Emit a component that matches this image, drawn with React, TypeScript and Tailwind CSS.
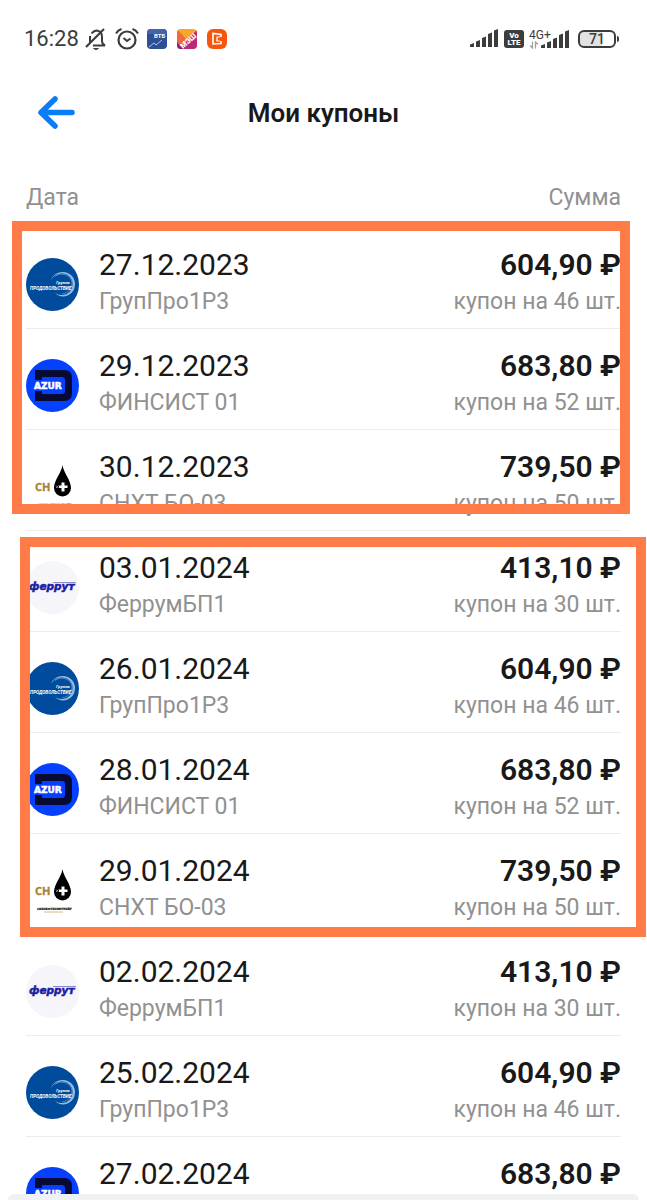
import React from 'react';

type Issuer = 'prod' | 'azur' | 'snht' | 'ferrum';

interface Coupon {
  date: string;
  issuer: Issuer;
  amount: string;
  count: number;
}

interface CouponGroup {
  id: string;
  frame: string;
  coupons: Coupon[];
}

const FRAME = 'after:absolute after:pointer-events-none after:border-[10px] after:border-[#ff7b47]';

const groups: CouponGroup[] = [
  {
    id: 'december',
    frame: `${FRAME} after:-top-[7px] after:bottom-[17px] after:-left-[14px] after:-right-[9px]`,
    coupons: [
      { date: '27.12.2023', issuer: 'prod', amount: '604,90 ₽', count: 46 },
      { date: '29.12.2023', issuer: 'azur', amount: '683,80 ₽', count: 52 },
      { date: '30.12.2023', issuer: 'snht', amount: '739,50 ₽', count: 50 },
    ],
  },
  {
    id: 'january',
    frame: `${FRAME} after:top-[6px] after:-bottom-[2px] after:-left-[6px] after:-right-[25px]`,
    coupons: [
      { date: '03.01.2024', issuer: 'ferrum', amount: '413,10 ₽', count: 30 },
      { date: '26.01.2024', issuer: 'prod', amount: '604,90 ₽', count: 46 },
      { date: '28.01.2024', issuer: 'azur', amount: '683,80 ₽', count: 52 },
      { date: '29.01.2024', issuer: 'snht', amount: '739,50 ₽', count: 50 },
    ],
  },
  {
    id: 'february',
    frame: '',
    coupons: [
      { date: '02.02.2024', issuer: 'ferrum', amount: '413,10 ₽', count: 30 },
      { date: '25.02.2024', issuer: 'prod', amount: '604,90 ₽', count: 46 },
      { date: '27.02.2024', issuer: 'azur', amount: '683,80 ₽', count: 52 },
    ],
  },
];

const issuerNames: Record<Issuer, string> = {
  prod: 'ГрупПро1Р3',
  azur: 'ФИНСИСТ 01',
  snht: 'СНХТ БО-03',
  ferrum: 'ФеррумБП1',
};

const ProdLogo = () => (
  <svg viewBox="0 0 53 53" className="size-[53px] rounded-full bg-[#004b9c]" aria-hidden="true">
    <path d="M25 22 A12 12 0 0 1 37 14 A12 12 0 0 1 49 26 A12 12 0 0 1 37 38.5 A12 12 0 0 1 29 35 A11 11 0 0 0 37 37 A10.5 10.5 0 0 0 46.5 26 A10 10 0 0 0 36 15.5 A12 12 0 0 0 25 22Z" fill="#8fbbe0" />
    <path d="M29 18.5 A11 11 0 0 1 45.5 22 A11 11 0 0 1 36 36" fill="none" stroke="#5f97cb" strokeWidth="0.8" />
    <text x="30" y="26" fontSize="4" fontStyle="italic" fontWeight="700" fill="#fff" fontFamily="'Open Sans', sans-serif">Группа</text>
    <text x="4" y="32" fontSize="4.6" fontStyle="italic" fontWeight="700" fill="#fff" fontFamily="Roboto, sans-serif">ПРОДОВОЛЬСТВИЕ</text>
  </svg>
);

const AzurLogo = () => (
  <svg viewBox="0 0 53 53" className="size-[53px] rounded-full bg-[#0540ff]" aria-hidden="true">
    <path d="M9 11 H38 Q46 11 46 19 V34 Q46 42 38 42 H9 V32 H16 V35 H36 Q39 35 39 32 V21 Q39 18 36 18 H16 V21 H9Z" fill="#070a33" />
    <text x="8" y="30" fontSize="9" fontWeight="700" fill="#fff" stroke="#fff" strokeWidth="0.5" fontFamily="'DejaVu Sans', sans-serif">AZUR</text>
  </svg>
);

const SnhtLogo = () => (
  <svg viewBox="0 0 53 53" className="size-[53px] rounded-full bg-white" aria-hidden="true">
    <text x="9" y="31" fontSize="11" fontWeight="700" fill="#a98138" stroke="#a98138" strokeWidth="0.3" fontFamily="'Noto Sans', sans-serif">CH</text>
    <path d="M36.5 5 C37.5 13 45 20 45 28 A8.5 8.5 0 0 1 28 28 C28 20 35.5 13 36.5 5Z" fill="#000" />
    <path d="M35.5 22.5 H38.5 V25.5 H41.5 V28 H38.5 V31.5 H35.5 V28 H33 V25.5 H35.5Z" fill="#fff" />
    <path d="M30 25.5 L32.5 28 M32.5 25.5 L30 28" stroke="#aaa" strokeWidth="0.8" />
    <text x="11" y="46" fontSize="2.8" fontWeight="700" fill="#111" stroke="#111" strokeWidth="0.2" fontFamily="'DejaVu Sans', sans-serif">СИБНЕФТЕХИМТРЕЙД</text>
    <path d="M18 48 H37" stroke="#d3b98e" strokeWidth="1" />
  </svg>
);

const FerrumLogo = () => (
  <svg viewBox="0 0 53 53" className="size-[53px] rounded-full bg-[#f5f5fa]" aria-hidden="true">
    <path d="M27 21.5 H50" stroke="#8c8ccb" strokeWidth="1" />
    <text x="3" y="29" fontSize="10.5" fontStyle="italic" fontWeight="700" fill="#1c1ca6" stroke="#1c1ca6" strokeWidth="0.5" fontFamily="'DejaVu Sans', sans-serif">феррут</text>
  </svg>
);

const logos: Record<Issuer, React.FC> = {
  prod: ProdLogo,
  azur: AzurLogo,
  snht: SnhtLogo,
  ferrum: FerrumLogo,
};

const SignalIcon = () => (
  <svg viewBox="0 0 29 19" className="h-[19px] w-[29px]" fill="#3c3c3c" aria-hidden="true">
    <path d="M0 18 V15.5 L4 14 V18Z M6 18 V12.5 L10 11 V18Z M12 18 V9 L16 7.5 V18Z M18 18 V5 L22 3.5 V18Z M24 18 V1.5 L28 0 V18Z" />
  </svg>
);

const StatusBar = () => (
  <div className="flex h-[77px] shrink-0 items-center justify-between pr-7 pl-6 text-[#3c3c3c]">
    <div className="flex items-center">
      <span className="text-[22px] leading-6">16:28</span>
      {/* muted bell */}
      <svg viewBox="0 0 22 24" className="ml-[6px] h-6 w-[22px]" fill="none" stroke="#3c3c3c" strokeWidth="2" aria-hidden="true">
        <path d="M6.5 6.5 Q8.5 4 11.5 3.5 Q17 4 17 10 V14 Q17 17 20 18.5 H8" />
        <path d="M5 9 V14 Q5 15 4.5 15.5" />
        <path d="M1 20 L19 2" strokeWidth="2.2" />
        <path d="M8 21 H14 Q13 23 11 23 Q9 23 8 21Z" fill="#3c3c3c" stroke="none" />
      </svg>
      {/* alarm clock */}
      <svg viewBox="0 0 24 22" className="ml-2 h-[22px] w-6" fill="none" stroke="#3c3c3c" strokeWidth="2.2" aria-hidden="true">
        <circle cx="12" cy="12" r="8.5" />
        <path d="M8.5 10 L12 13 L15.5 10.5" strokeWidth="2" />
        <path d="M1 5.5 Q3 2 6.5 1 M23 5.5 Q21 2 17.5 1" strokeWidth="2" />
      </svg>
      <svg viewBox="0 0 20 20" className="ml-2 size-5 rounded" aria-hidden="true">
        <rect width="20" height="20" fill="#2e4f93" />
        <rect width="20" height="5" fill="#4563a8" />
        <text x="7" y="9" fontSize="6" fontWeight="700" fill="#fff" fontFamily="Roboto, sans-serif">ВТБ</text>
        <path d="M2 18 L7 14 L9 16 L15 11" fill="none" stroke="#a9c6f0" strokeWidth="1" />
      </svg>
      <svg viewBox="0 0 20 20" className="ml-[10px] size-5 rounded" aria-hidden="true">
        <rect width="20" height="20" fill="#f6a52d" />
        <path d="M0 0 L9 10 L0 20Z" fill="#f0693f" />
        <path d="M20 1 V20 H1Z" fill="#b9287b" />
        <path d="M0 20 V13 L6 20Z" fill="#8c2370" />
        <text x="6" y="20" fontSize="7.5" fontWeight="900" fill="#fff" transform="rotate(-42 6 20)" fontFamily="Roboto, sans-serif">МЭШ</text>
      </svg>
      <svg viewBox="0 0 20 20" className="ml-[10px] size-5 rounded-md" aria-hidden="true">
        <rect width="20" height="20" fill="#f4570c" />
        <path d="M14 8 V5.5 L6 4.5 V15 L14 14.5 V12" fill="none" stroke="#fff" strokeWidth="1.6" />
        <path d="M13 8 H10 V12 H13" fill="none" stroke="#fff" strokeWidth="1.2" />
      </svg>
    </div>

    <div className="flex items-center">
      <SignalIcon />
      <div className="ml-[5px] flex h-[18px] w-5 flex-col items-center justify-center rounded-[3px] bg-[#3c3c3c] text-[8px] leading-[7px] font-black text-white">
        <span>Vo</span>
        <span>LTE</span>
      </div>
      <div className="ml-[5px] flex items-end">
        <div className="flex w-3 flex-col">
          <span className="text-[12px] leading-3 whitespace-nowrap">4G+</span>
          <svg viewBox="0 0 10 8" className="h-2 w-[10px]" fill="none" stroke="#a0a0a0" strokeWidth="1.2" aria-hidden="true">
            <path d="M1 4.5 L3.5 7 V0.5 M6.5 7.5 V1 L9 3.5" />
          </svg>
        </div>
        <SignalIcon />
      </div>
      {/* battery */}
      <div className="ml-2 flex h-[18px] w-[38px] items-center justify-center rounded-md border-2 border-[#3c3c3c] bg-linear-to-r from-[#e2e2e2] from-65% to-white to-65% text-[14px] leading-4 font-medium">
        71
      </div>
      <span className="ml-px h-[6px] w-[2px] rounded-r bg-[#3c3c3c]" />
    </div>
  </div>
);

const CouponRow = ({ coupon }: { coupon: Coupon }) => {
  const Logo = logos[coupon.issuer];

  return (
    <tr>
      <td className="border-b border-[#ececec] pt-4 pb-[10px] align-top">
        <div className="flex gap-5">
          <div className="mt-[14px]">
            <Logo />
          </div>
          <div>
            <p className="text-[30px] leading-[42px] text-[#19191a]">{coupon.date}</p>
            <p className="text-[23px] leading-8 text-[#919191]">{issuerNames[coupon.issuer]}</p>
          </div>
        </div>
      </td>
      <td className="border-b border-[#ececec] pt-4 pb-[10px] text-right align-top">
        <p className="text-[30px] leading-[42px] font-semibold text-[#19191a]">{coupon.amount}</p>
        <p className="text-[23px] leading-8 text-[#919191]">купон на {coupon.count} шт.</p>
      </td>
    </tr>
  );
};

const App: React.FC = () => {
  return (
    <div className="flex h-screen flex-col overflow-hidden bg-white font-['Roboto',sans-serif]">
      <StatusBar />

      <header className="flex h-[72px] shrink-0 items-center px-9">
        <button type="button" aria-label="Назад" className="w-10">
          <svg viewBox="0 0 40 36" className="h-9 w-10" fill="none" stroke="#0a7cf5" strokeWidth="5.5" strokeLinecap="round" strokeLinejoin="round" aria-hidden="true">
            <path d="M36 17.5 H6 M19 4 L5 17.5 L19 31" />
          </svg>
        </button>
        <h1 className="flex-1 text-center text-[26px] leading-8 font-semibold text-[#19191a]">Мои купоны</h1>
        <div className="w-10" />
      </header>

      <main className="min-h-0 flex-1 overflow-hidden px-[26px] pt-[34px]">
        <table className="w-full border-separate border-spacing-0">
          <thead>
            <tr className="text-[23px] leading-[30px] text-[#919191]">
              <th className="pb-[15px] text-left font-normal">Дата</th>
              <th className="pb-[15px] text-right font-normal">Сумма</th>
            </tr>
          </thead>
          {groups.map((group) => (
            <tbody key={group.id} className={`relative ${group.frame}`}>
              {group.coupons.map((coupon) => (
                <CouponRow key={coupon.date} coupon={coupon} />
              ))}
            </tbody>
          ))}
        </table>
      </main>

      {/* top edge of the bottom sheet */}
      <div className="mx-2 h-[6px] shrink-0 rounded-t-2xl bg-[#f0f1f3]" />
    </div>
  );
};

export default App;
